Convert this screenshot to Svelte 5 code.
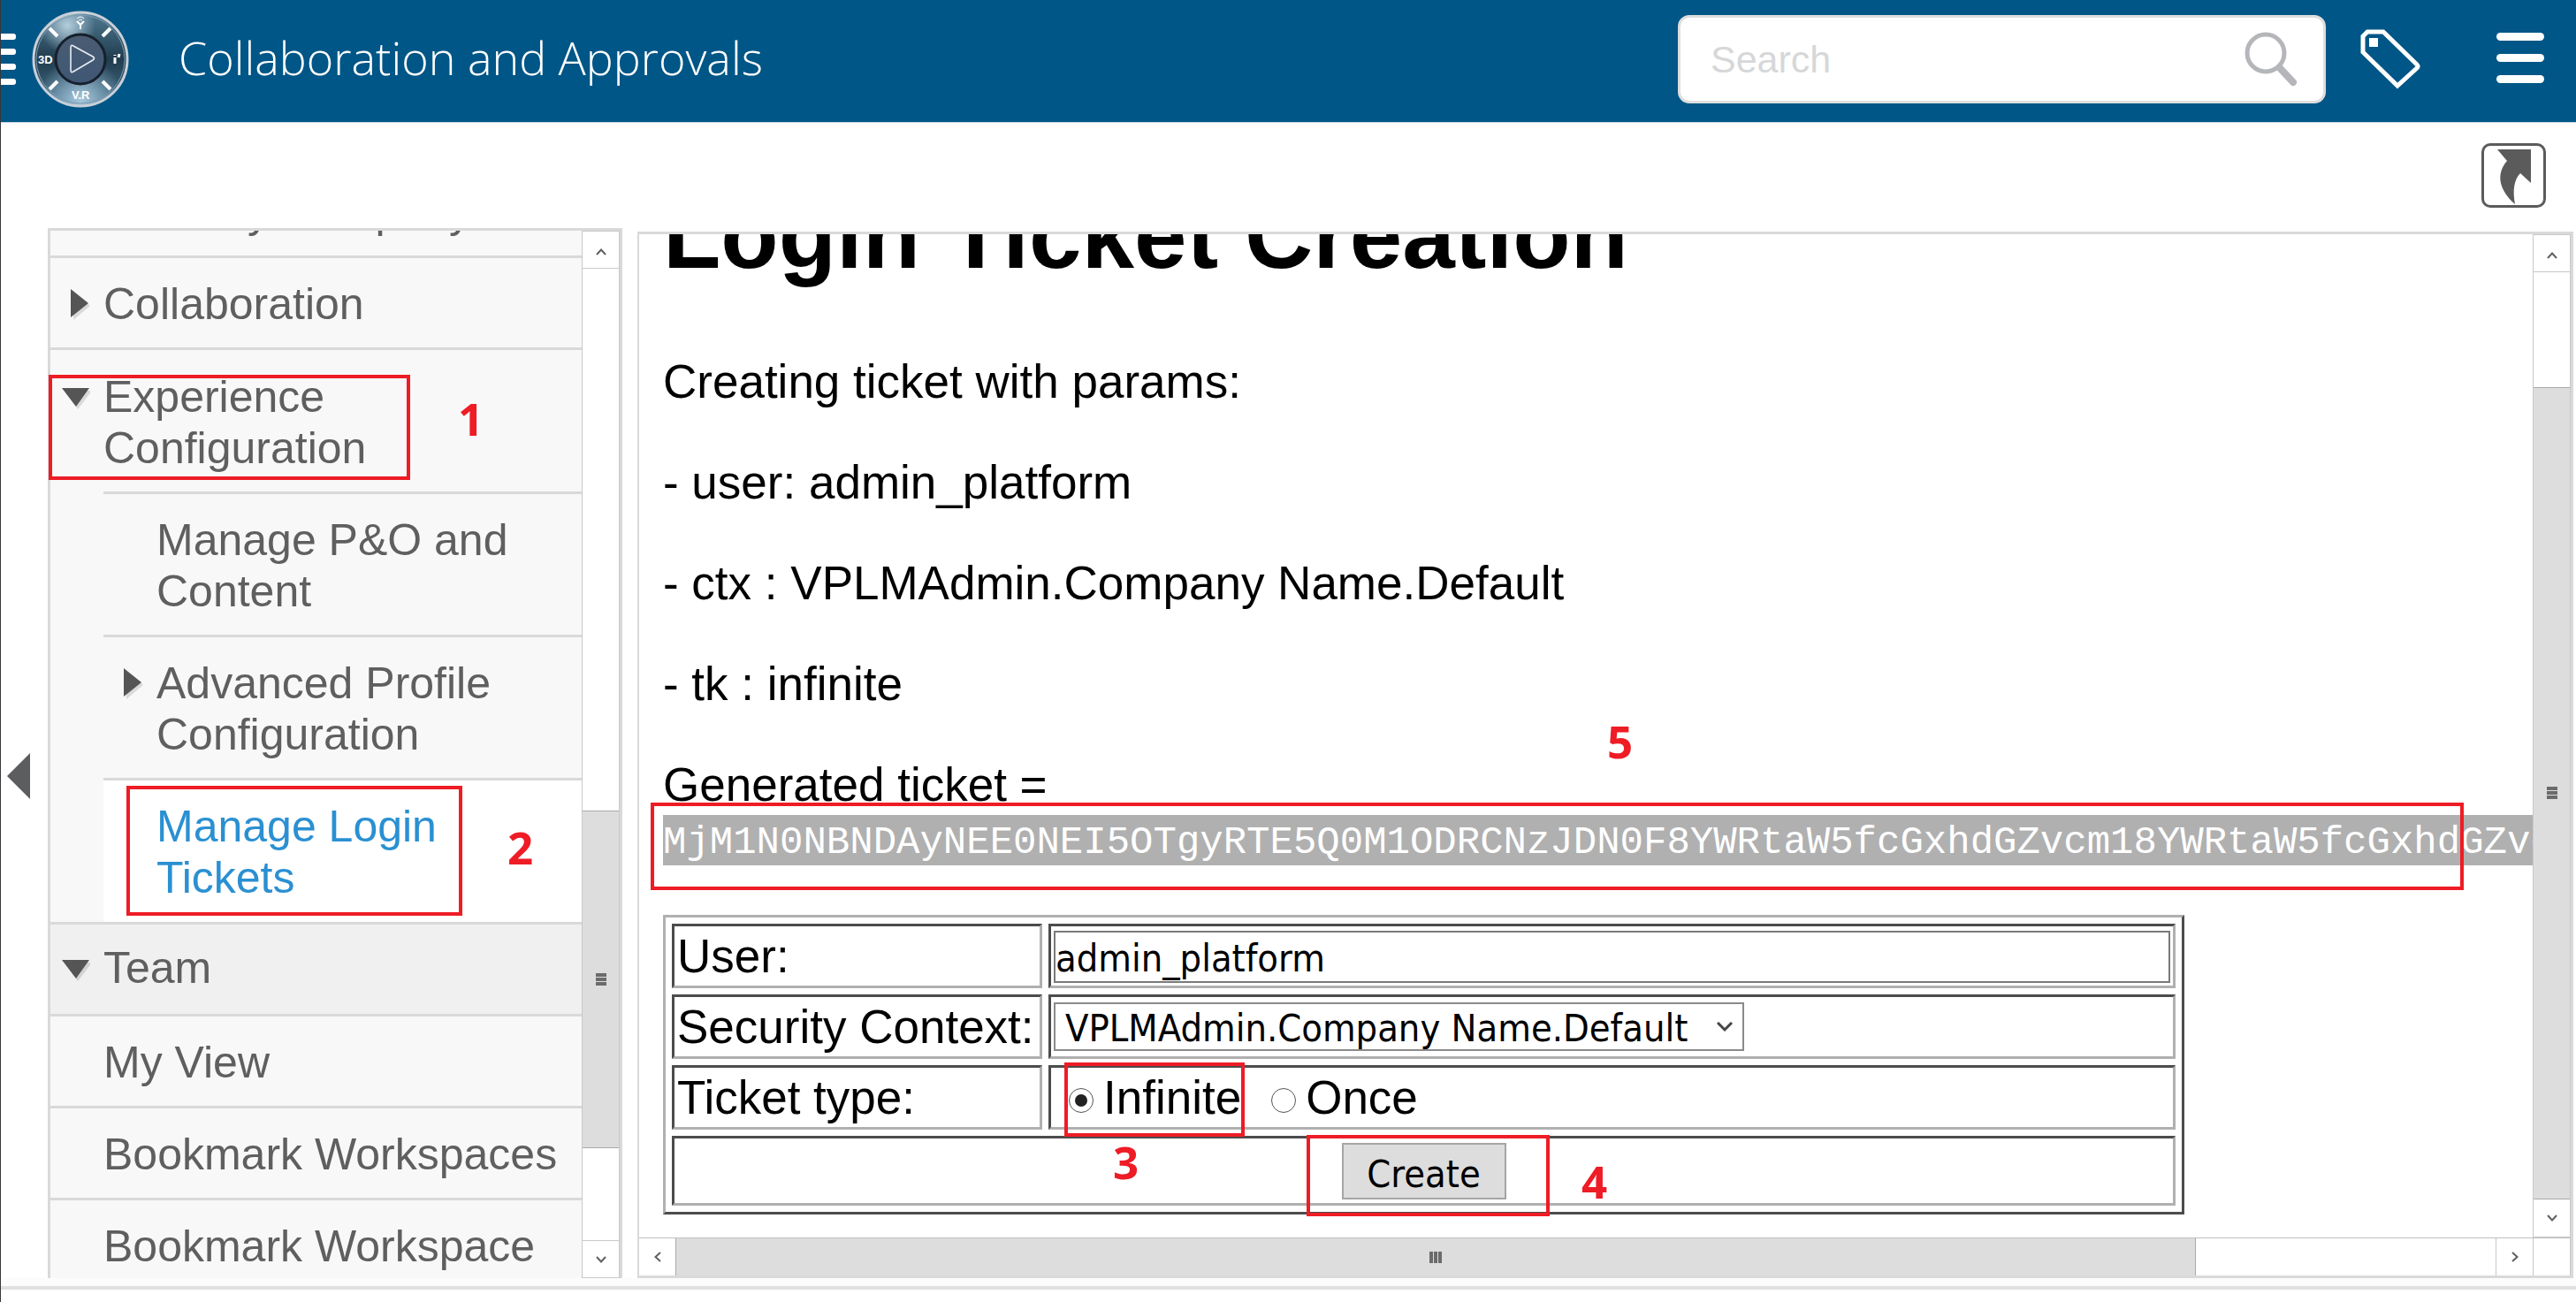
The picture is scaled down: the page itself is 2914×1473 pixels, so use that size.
<script lang="ts">
  type Entry = {
    label: string;
    arrow?: 'right' | 'down';
    kind?: 'clipped' | 'section';
    children?: { label: string; arrow?: 'right'; active?: boolean }[];
  };

  const entries: Entry[] = [
    { label: 'View My Company', kind: 'clipped' },
    { label: 'Collaboration', arrow: 'right' },
    {
      label: 'Experience Configuration',
      arrow: 'down',
      children: [
        { label: 'Manage P&O and Content' },
        { label: 'Advanced Profile Configuration', arrow: 'right' },
        { label: 'Manage Login Tickets', active: true }
      ]
    },
    { label: 'Team', arrow: 'down', kind: 'section' },
    { label: 'My View' },
    { label: 'Bookmark Workspaces' },
    { label: 'Bookmark Workspace' }
  ];

  const lines = [
    'Creating ticket with params:',
    '- user: admin_platform',
    '- ctx : VPLMAdmin.Company Name.Default',
    '- tk : infinite',
    'Generated ticket ='
  ];

  const ticket =
    'MjM1N0NBNDAyNEE0NEI5OTgyRTE5Q0M1ODRCNzJDN0F8YWRtaW5fcGxhdGZvcm18YWRtaW5fcGxhdGZvcm18';

  let user = $state('admin_platform');
  let context = $state('VPLMAdmin.Company Name.Default');
  let ticketType = $state('infinite');
</script>

{#snippet chevron(dir: string)}
  <svg class="chev {dir}" viewBox="0 0 14 10" width="14" height="10" aria-hidden="true">
    <path d="M2 8 L7 2.5 L12 8" fill="none" stroke="#606060" stroke-width="2" />
  </svg>
{/snippet}

{#snippet arrowIcon(dir: string)}
  {#if dir === 'right'}
    <svg class="arrow" viewBox="0 0 32 36" width="32" height="36" aria-hidden="true">
      <path d="M13 4 L32 20 L13 36 Z" fill="#000" opacity="0.12" />
      <path d="M10 1 L30 17 L10 33 Z" fill="#555" />
    </svg>
  {:else}
    <svg class="arrow" viewBox="0 0 32 36" width="32" height="36" aria-hidden="true">
      <path d="M3 12 H34 L18 33 Z" fill="#000" opacity="0.12" />
      <path d="M0 9 H31 L16 30 Z" fill="#555" />
    </svg>
  {/if}
{/snippet}

<div class="page">
  <header>
    <button class="drag" aria-label="Open panel"><i></i><i></i><i></i><i></i></button>
    <button class="compass" aria-label="Compass">
      <svg viewBox="0 0 110 110" width="110" height="110" aria-hidden="true">
        <defs>
          <radialGradient id="glow-top" cx="0.36" cy="0.14" r="0.3">
            <stop offset="0" stop-color="#b4cedc" />
            <stop offset="1" stop-color="#b4cedc" stop-opacity="0" />
          </radialGradient>
          <radialGradient id="glow-bottom" cx="0.5" cy="0.94" r="0.46">
            <stop offset="0" stop-color="#a6c8dd" />
            <stop offset="1" stop-color="#a6c8dd" stop-opacity="0" />
          </radialGradient>
          <linearGradient id="ring" x1="0" y1="0" x2="0" y2="1">
            <stop offset="0" stop-color="#4f7a92" />
            <stop offset="0.5" stop-color="#213c4e" />
            <stop offset="1" stop-color="#46728c" />
          </linearGradient>
          <linearGradient id="hub" x1="0" y1="0" x2="0" y2="1">
            <stop offset="0" stop-color="#4a5c72" />
            <stop offset="1" stop-color="#3f5775" />
          </linearGradient>
        </defs>
        <circle cx="55" cy="55" r="53" fill="url(#ring)" />
        <circle cx="55" cy="55" r="53" fill="url(#glow-top)" />
        <circle cx="55" cy="55" r="53" fill="url(#glow-bottom)" />
        <circle cx="55" cy="55" r="53" fill="none" stroke="#c9d0d8" stroke-width="3" />
        <circle cx="55" cy="55" r="50" fill="none" stroke="#7f9bb0" stroke-width="1" />
        <circle cx="55" cy="55" r="28" fill="url(#hub)" stroke="#16202c" stroke-width="3" />
        <path d="M47 40 Q44 38 44 42 V67 Q44 71 47 69 L69 56 Q72 54 69 52 Z" fill="none" stroke="#e8edf2" stroke-width="1.6" />
        <g stroke="#fff" stroke-width="4">
          <path d="M20 20 L29 29" /><path d="M89 20 L80 29" />
          <path d="M20 89 L29 80" /><path d="M89 89 L80 80" />
        </g>
        <g fill="none" stroke="#fff" stroke-width="2">
          <path d="M51 12 L55 16 L59 12 M55 16 V21" />
          <path d="M51 9 Q55 5 59 9 M53 11 Q55 9 57 11" stroke-width="1" />
          <path d="M94 53 V60 M94 50 V51 M98 53 L99 49" stroke-width="3" />
        </g>
        <g fill="#fff" font-family="Liberation Sans Narrow, Liberation Sans, sans-serif" font-weight="700" font-size="13">
          <text x="7" y="60" textContent="3D">3D</text>
          <text x="45" y="100">V.R</text>
        </g>
      </svg>
    </button>
    <span class="title">Collaboration and Approvals</span>
    <label class="search">
      <input type="search" placeholder="Search" aria-label="Search" />
      <svg viewBox="0 0 64 64" width="64" height="64" aria-hidden="true">
        <circle cx="25" cy="25" r="21" fill="none" stroke="#b4b6b9" stroke-width="5" />
        <path d="M41 42 L56 58" stroke="#b4b6b9" stroke-width="8" stroke-linecap="round" />
      </svg>
    </label>
    <button class="tag" aria-label="Tags">
      <svg viewBox="0 0 70 70" width="70" height="70" aria-hidden="true">
        <path d="M9 4 H27 L65 41 Q67 43 65 45 L43 65 L4 27 V9 Z" fill="none" stroke="#fff" stroke-width="5" />
        <rect x="11" y="11" width="10" height="10" fill="#fff" />
      </svg>
    </button>
    <button class="menu" aria-label="Menu"><i></i><i></i><i></i></button>
  </header>

  <div class="toolbar">
    <button class="share" aria-label="Open in new window">
      <svg viewBox="0 0 67 67" width="67" height="67" aria-hidden="true">
        <path d="M15 4 H53 V42 L41 31 C34 38 32 50 35 66 C17 50 13 32 26 17 Z" fill="#5b5b5b" />
      </svg>
    </button>
  </div>

  <div class="workspace">
    <div class="rail">
      <button class="collapse" aria-label="Collapse navigation">
        <svg viewBox="0 0 26 52" width="26" height="52" aria-hidden="true">
          <path d="M26 0 V52 L0 26 Z" fill="#5b5d5f" />
        </svg>
      </button>
    </div>

    <aside>
      <nav>
        <ul>
          {#each entries as entry}
            <li class={entry.kind ?? ''}>
              <a href="#nav" class:wrap={entry.children}>
                {#if entry.arrow}{@render arrowIcon(entry.arrow)}{/if}
                {entry.label}
              </a>
              {#if entry.children}
                <ul class="nested">
                  {#each entry.children as child}
                    <li>
                      <a href="#nav" class:active={child.active}>
                        {#if child.arrow}{@render arrowIcon(child.arrow)}{/if}
                        {child.label}
                      </a>
                    </li>
                  {/each}
                </ul>
              {/if}
            </li>
          {/each}
        </ul>
      </nav>
      <div class="vbar side">
        <button aria-label="Scroll up">{@render chevron('up')}</button>
        <div class="track before"></div>
        <div class="thumb"><i></i><i></i><i></i></div>
        <div class="track after"></div>
        <button aria-label="Scroll down">{@render chevron('down')}</button>
      </div>
    </aside>

    <main>
      <div class="view">
        <div class="content">
          <h1>Login Ticket Creation</h1>
          {#each lines as line}
            <p>{line}</p>
          {/each}
          <pre>{ticket}</pre>
          <form onsubmit={(e) => e.preventDefault()}>
            <table>
              <tbody>
                <tr>
                  <th scope="row"><label for="user">User:</label></th>
                  <td><div class="field low"><input id="user" type="text" bind:value={user} /></div></td>
                </tr>
                <tr>
                  <th scope="row"><label for="context">Security Context:</label></th>
                  <td>
                    <div class="field">
                      <span class="select">
                        <select id="context" bind:value={context}>
                          <option>VPLMAdmin.Company Name.Default</option>
                        </select>
                        <svg viewBox="0 0 18 12" width="18" height="12" aria-hidden="true">
                          <path d="M1 1 L9 9 L17 1" fill="none" stroke="#444" stroke-width="3" />
                        </svg>
                      </span>
                    </div>
                  </td>
                </tr>
                <tr>
                  <th scope="row">Ticket type:</th>
                  <td>
                    <div class="field radios">
                      <label><input type="radio" name="type" value="infinite" bind:group={ticketType} />Infinite</label>
                      <label><input type="radio" name="type" value="once" bind:group={ticketType} />Once</label>
                    </div>
                  </td>
                </tr>
                <tr>
                  <td colspan="2"><div class="actions"><button class="create">Create</button></div></td>
                </tr>
              </tbody>
            </table>
          </form>
        </div>
        <div class="vbar">
          <button aria-label="Scroll up">{@render chevron('up')}</button>
          <div class="track before"></div>
          <div class="thumb"><i></i><i></i><i></i></div>
          <button aria-label="Scroll down">{@render chevron('down')}</button>
        </div>
      </div>
      <div class="hbar">
        <button aria-label="Scroll left">{@render chevron('left')}</button>
        <div class="thumb"><i></i><i></i><i></i></div>
        <div class="track"></div>
        <button aria-label="Scroll right">{@render chevron('right')}</button>
        <div class="corner"></div>
      </div>
    </main>
  </div>
  <footer></footer>

  <div class="mark box1"></div><span class="num num1">1</span>
  <div class="mark box2"></div><span class="num num2">2</span>
  <div class="mark box3"></div><span class="num num3">3</span>
  <div class="mark box4"></div><span class="num num4">4</span>
  <div class="mark box5"></div><span class="num num5">5</span>
</div>

<style>
  :global(body) {
    background: #fff;
    overflow: hidden;
  }

  .page, .page * { box-sizing: border-box; }

  .page {
    position: relative;
    display: flex;
    flex-direction: column;
    height: 100vh;
    overflow: hidden;
    border-left: 1px solid #36383c;
    font-family: 'Liberation Sans', Arial, sans-serif;
    color: #000;
  }

  button {
    padding: 0;
    border: 0;
    background: none;
    font: inherit;
    cursor: pointer;
  }

  svg { display: block; }

  /* Header */
  header {
    display: flex;
    align-items: center;
    flex: none;
    height: 139px;
    padding-bottom: 4px;
    background: #005686;
    border-bottom: 1px solid #c9d6e0;
    color: #fff;
  }

  .drag, .menu { display: flex; flex-direction: column; }
  .drag { width: 17px; gap: 10px; }
  .drag i { height: 7px; background: #fff; border-radius: 0 3px 3px 0; }
  .compass { margin-left: 18px; }

  .title {
    flex: 1;
    margin-left: 56px;
    padding-bottom: 4px;
    font-family: 'Open Sans', 'Noto Sans', sans-serif;
    font-weight: 300;
    font-size: 52px;
    line-height: 68px;
    white-space: nowrap;
  }

  .search {
    display: flex;
    align-items: center;
    width: 733px;
    height: 100px;
    padding: 0 26px 0 34px;
    background: #fff;
    border: 3px solid #dedede;
    border-radius: 13px;
  }
  .search input {
    flex: 1;
    min-width: 0;
    padding: 0;
    border: 0;
    outline: 0;
    background: none;
    font-family: inherit;
    font-size: 43px;
    line-height: 50px;
  }
  .search input::placeholder { color: #d6d7d9; opacity: 1; }

  .tag { margin-left: 38px; }
  .menu { width: 54px; gap: 15px; margin: 0 36px 4px 85px; }
  .menu i { height: 9px; background: #fff; border-radius: 5px; }

  .toolbar {
    display: flex;
    justify-content: flex-end;
    flex: none;
    height: 119px;
    padding: 23px 34px 0 0;
  }
  .share {
    width: 73px;
    height: 73px;
    border: 3px solid #5b5b5b;
    border-radius: 10px;
  }

  /* Workspace */
  .workspace {
    display: flex;
    flex: 1;
    min-height: 0;
    padding-right: 3px;
  }
  .rail {
    display: flex;
    flex: none;
    align-items: center;
    width: 53px;
    padding: 52px 0 0 7px;
  }

  aside {
    display: flex;
    flex: none;
    width: 650px;
    margin-right: 17px;
    border: 3px solid #d9d9d9;
    border-bottom: 0;
    background: #f8f8f8;
  }
  nav {
    flex: 1;
    min-width: 0;
    overflow: hidden;
    font-size: 50px;
    line-height: 58px;
  }
  ul { margin: 0; padding: 0; list-style: none; }

  nav a {
    position: relative;
    display: block;
    min-height: 104px;
    padding: 23px 12px 20px 60px;
    border-bottom: 3px solid #d9d9d9;
    color: #5f5f5f;
    text-decoration: none;
  }
  nav a.wrap {
    padding: 24px 120px 20px 0;
    margin-left: 60px;
  }
  nav a.wrap .arrow { left: -47px; }
  .arrow { position: absolute; left: 13px; top: 34px; }

  .clipped { display: flex; align-items: flex-end; height: 31px; overflow: hidden; }
  .clipped a { flex: 1; }
  .section a { padding: 20px 12px 23px 60px; background: #f0f0f0; }
  .section .arrow { top: 31px; }

  .nested { padding-left: 60px; background: #f8f8f8; }
  .nested a { min-height: 162px; padding: 23px 20px 20px 60px; }
  .nested li:last-child { margin-left: -60px; border-bottom: 3px solid #d9d9d9; }
  .nested li:last-child a { margin-left: 60px; min-height: 160px; border-bottom: 0; padding-right: 80px; }
  .nested a.active { background: #fff; color: #2a90d2; }

  /* Scroll bars */
  .vbar {
    display: flex;
    flex-direction: column;
    flex: none;
    width: 43px;
    background: #fff;
    border: 1px solid #c9c9c9;
  }
  .vbar button, .hbar button {
    display: flex;
    align-items: center;
    justify-content: center;
    flex: none;
    width: 41px;
    height: 42px;
  }
  .track { min-height: 0; min-width: 0; }
  .thumb {
    display: flex;
    align-items: center;
    justify-content: center;
    gap: 1px;
    background: #ddd;
  }
  .thumb i { background: #6b6b6b; }
  .vbar .thumb {
    flex-direction: column;
    border-top: 1px solid #a9a9a9;
    border-bottom: 1px solid #a9a9a9;
  }
  .vbar .thumb i { width: 12px; height: 4px; }
  .vbar button:first-child { padding-top: 4px; border-bottom: 1px solid #c9c9c9; }
  .side button:last-child { border-top: 1px solid #c9c9c9; }
  .side .before { flex: 615; }
  .side .thumb { flex: 381; }
  .side .after { flex: 104; }
  .view .before { flex: 130; }
  .view .thumb { flex: 921; }

  .chev.down { transform: rotate(180deg); }
  .chev.left { transform: rotate(-90deg); }
  .chev.right { transform: rotate(90deg); }

  .hbar {
    display: flex;
    flex: none;
    height: 43px;
    border-top: 1px solid #c0c0c0;
  }
  .hbar button { height: auto; }
  .hbar .thumb {
    flex: 1718;
    border-left: 1px solid #a9a9a9;
    border-right: 1px solid #a9a9a9;
  }
  .hbar .thumb i { width: 4px; height: 13px; }
  .hbar .track { flex: 339; border-right: 1px solid #c9c9c9; }
  .corner {
    flex: none;
    width: 43px;
    border-left: 1px solid #c9c9c9;
    border-right: 1px solid #c9c9c9;
  }

  /* Main frame */
  main {
    display: flex;
    flex: 1;
    flex-direction: column;
    min-width: 0;
    margin-top: 4px;
    border: 3px solid #d9d9d9;
    border-left-width: 2px;
  }
  .view { display: flex; flex: 1; min-height: 0; }
  .content {
    flex: 1;
    min-width: 0;
    overflow: hidden;
    padding-left: 27px;
    font-size: 53px;
    line-height: 61px;
  }
  h1 {
    margin: -58px 0 75px;
    font-size: 107px;
    line-height: 119px;
    white-space: nowrap;
  }
  p { margin: 0 0 53px; }
  p:last-of-type { margin-bottom: 4px; }
  pre {
    margin: 0 0 56px;
    padding: 8px 0 2px;
    background: #b0b0b0;
    color: #fff;
    font-family: 'Liberation Mono', monospace;
    font-size: 44px;
    line-height: 47px;
    overflow: hidden;
  }

  table {
    border: 3px solid;
    border-color: #b0b0b0 #4c4c4c #4c4c4c #b0b0b0;
    border-collapse: separate;
    border-spacing: 7px;
  }
  th, td {
    padding: 3px;
    border: 3px solid;
    border-color: #4c4c4c #b0b0b0 #b0b0b0 #4c4c4c;
    font-weight: 400;
    text-align: left;
    vertical-align: top;
  }
  th { width: 419px; white-space: nowrap; }
  .field { display: flex; align-items: center; height: 61px; }
  .low { align-items: flex-end; }

  #user, select, .create {
    font-family: 'DejaVu Sans Condensed', 'Noto Sans', sans-serif;
    font-size: 43px;
    color: #000;
  }
  #user {
    width: 1263px;
    height: 59px;
    padding: 2px 0 0;
    border: 2px solid #7a7a7a;
    background: #fff;
  }
  .select { position: relative; }
  select {
    display: block;
    width: 781px;
    height: 55px;
    padding: 2px 40px 0 11px;
    border: 2px solid #8a8a8a;
    border-radius: 0;
    background: #fff;
    appearance: none;
  }
  .select svg { position: absolute; right: 13px; top: 22px; pointer-events: none; }

  .radios { gap: 34px; padding-left: 17px; }
  .radios label { display: flex; align-items: center; gap: 11px; }
  .radios input {
    display: grid;
    place-items: center;
    width: 28px;
    height: 28px;
    margin: 6px 0 0;
    border: 1px solid #555;
    border-radius: 50%;
    background: #fff;
    appearance: none;
  }
  .radios input:checked::before {
    content: '';
    width: 14px;
    height: 14px;
    border-radius: 50%;
    background: #222;
  }
  .actions { display: flex; justify-content: center; padding: 2px 0 1px; }
  .create {
    width: 186px;
    height: 64px;
    padding-top: 3px;
    border: 2px solid #a5a5a5;
    background: #ddd;
  }

  footer {
    flex: none;
    height: 27px;
    border-top: 9px solid #fcfcfc;
  }
  footer::before {
    content: '';
    display: block;
    height: 4px;
    background: #e0e0e0;
  }

  /* Numbered callouts laid over the page */
  .mark { position: absolute; border: 4px solid #ee1c25; pointer-events: none; }
  .box1 { left: 54px; top: 424px; width: 409px; height: 119px; }
  .box2 { left: 142px; top: 889px; width: 380px; height: 147px; }
  .box3 { left: 1203px; top: 1202px; width: 204px; height: 84px; }
  .box4 { left: 1477px; top: 1284px; width: 275px; height: 92px; }
  .box5 { left: 735px; top: 908px; width: 2051px; height: 99px; }
  .num {
    position: absolute;
    color: #ee1c25;
    font-family: 'Noto Sans', sans-serif;
    font-weight: 700;
    font-size: 51px;
    line-height: 60px;
  }
  .num1 { left: 517px; top: 443px; }
  .num2 { left: 573px; top: 928px; }
  .num3 { left: 1258px; top: 1284px; }
  .num4 { left: 1788px; top: 1306px; }
  .num5 { left: 1817px; top: 808px; }
</style>
